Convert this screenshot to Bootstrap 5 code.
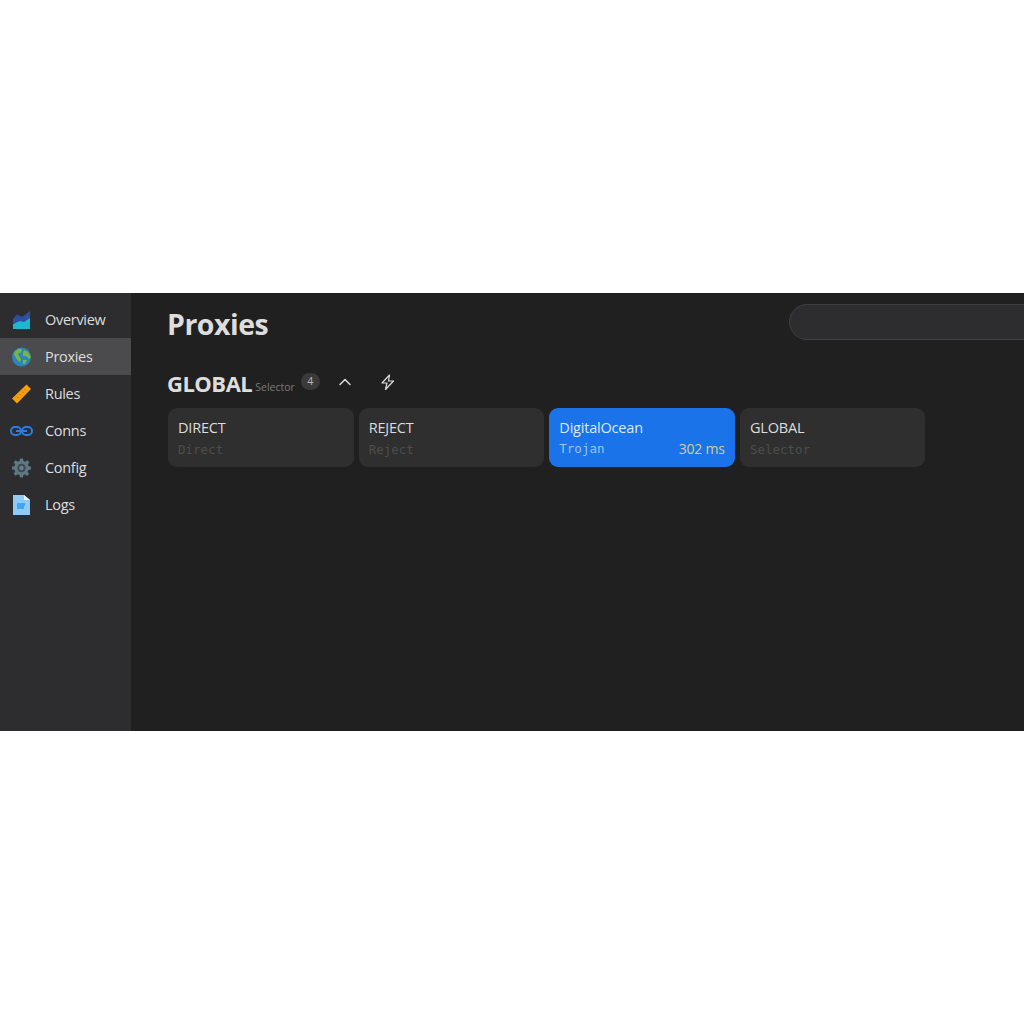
<!DOCTYPE html>
<html lang="en">
<head>
    <meta charset="UTF-8">
    <meta name="viewport" content="width=device-width, initial-scale=1.0">
    <link href="https://cdn.jsdelivr.net/npm/bootstrap@5.3.0/dist/css/bootstrap.min.css" rel="stylesheet">
    <style>
        body { background: #fff; font-family: "Open Sans", "Noto Sans", sans-serif; overflow: hidden; }
        .app-shell { height: 438px; width: 1024px; background: #202020; color: #ddd; overflow: hidden; }
        .side-bar { width: 131px; background: #2d2d30; padding-top: 8px; flex: none; }
        .side-item { height: 37px; padding: 1px 0 0 12px; font-size: 14.5px; color: #ddd; letter-spacing: -0.3px; }
        .side-item.is-active { background: #4b4b4d; }
        .side-icon { width: 19px; height: 20px; margin-right: 14px; flex: none; }
        .side-icon.is-wide { width: 23px; margin-left: -2px; margin-right: 12px; }
        .main-pane { padding: 13px 0 0 37px; min-width: 0; }
        .page-head { height: 36px; margin-top: -2px; }
        .page-title { width: 100px; flex: none; margin: 0 0 0 -1px; padding-top: 4px; font-size: 28.5px; font-weight: 700; color: #ddd; letter-spacing: -0.5px; line-height: 36px; white-space: nowrap; }
        .search-pill { width: 300px; height: 36px; margin-left: 522px; flex: none; background: #2d2d30; border: 1px solid #3f3f42; border-radius: 18px; }
        .group-head { margin-top: 26px; height: 34px; }
        .group-name { font-size: 22px; font-weight: 700; color: #ddd; letter-spacing: -0.5px; line-height: 34px; margin-left: -1px; }
        .group-type { font-size: 10.5px; color: #7b7b7b; margin-left: 3px; margin-top: 9px; }
        .group-count { width: 19px; height: 17px; border-radius: 9px; background: #3a3a3a; color: #bbb; font-size: 10.5px; margin-left: 6px; margin-top: -3px; }
        .head-btn { width: 18px; height: 18px; color: #ddd; margin-top: -2px; }
        .chevron-btn { margin-left: 16px; }
        .bolt-btn { margin-left: 25px; }
        .proxy-grid { display: grid; grid-template-columns: repeat(4, 185.5px); gap: 5.17px; margin-top: 8px; }
        .proxy-card { height: 59px; border-radius: 9px; background: #2f2f2f; padding: 10px 10px 0; }
        .proxy-card.is-now { background: #1a73e8; }
        .proxy-name { font-size: 14.5px; line-height: 20px; color: #ddd; letter-spacing: -0.2px; }
        .proxy-card.is-now .proxy-name { color: #dbe9fb; }
        .proxy-kind { font-family: "DejaVu Sans Mono", "Liberation Mono", monospace; font-size: 12.5px; color: #4d4d4d; line-height: 18px; margin-top: 3px; }
        .proxy-card.is-now .proxy-kind { color: #9cc3f5; margin-top: 2px; }
        .proxy-delay { font-size: 14px; color: #d3cc9f; line-height: 18px; letter-spacing: -0.2px; margin-top: 2px; }
    </style>
</head>
<body class="min-vh-100 d-flex align-items-center m-0">
    <div class="app-shell d-flex">
        <nav class="side-bar">
            <div class="side-item d-flex align-items-center">
                <svg class="side-icon" viewBox="0 0 19 20"><path fill="#2c4fa3" d="M1 9l4-4.500 5 2.500 8-6v12H1z"/><path fill="#1fb6cf" d="M1 14l7-3 4 1 6-4v11H1z"/></svg>
                Overview
            </div>
            <div class="side-item is-active d-flex align-items-center">
                <svg class="side-icon" viewBox="0 0 19 20"><circle cx="9.500" cy="10" r="9.500" fill="#2a86bd"/><path fill="#7cb342" d="M3 4.500l4-3 3 1-1 3-3 1 1 3 2 2-1 4-3-3-3-5zM12 3l4 2 3 5-2 2-3-3-3 0 0-3zM11 13l4 0-2 4-2 0z"/></svg>
                Proxies
            </div>
            <div class="side-item d-flex align-items-center">
                <svg class="side-icon" viewBox="0 0 19 20"><path fill="#f59f0b" d="M14.500 0.500L19 5 5 19.500 0 14.500z"/><path stroke="#c47c04" stroke-width="1" d="M12.500 5l1.500 1.500M10 7.500l1.500 1.500M7.500 10L9 11.500M5 12.500L6.500 14"/></svg>
                Rules
            </div>
            <div class="side-item d-flex align-items-center">
                <svg class="side-icon is-wide" viewBox="0 0 23 20"><g fill="none" stroke="#2a7de1" stroke-width="2"><rect x="1" y="6" width="10" height="8" rx="4"/><rect x="12" y="6" width="10" height="8" rx="4"/><path d="M6 10h11"/></g></svg>
                Conns
            </div>
            <div class="side-item d-flex align-items-center">
                <svg class="side-icon" viewBox="0 0 19 19"><path fill="#5f7782" d="M8 0h3l.5 2.600 1.700.7 2.200-1.500 2 2-1.500 2.200.7 1.700L19 8v3l-2.600.5-.7 1.700 1.500 2.200-2 2-2.200-1.500-1.700.7L11 19H8l-.5-2.600-1.700-.7-2.200 1.500-2-2 1.500-2.200-.7-1.700L0 11V8l2.400-.3.7-1.700-1.500-2.200 2-2 2.200 1.500 1.700-.7z"/><circle cx="9.500" cy="9.500" r="4.200" fill="#3c4a50"/><circle cx="9.500" cy="9.500" r="2.200" fill="#6a7f89"/></svg>
                Config
            </div>
            <div class="side-item d-flex align-items-center">
                <svg class="side-icon" viewBox="0 0 19 20"><path fill="#90caf9" d="M1 0h11l6 5v15H1z"/><path fill="#e3f2fd" d="M12 0l6 5h-6z"/><path fill="#42a5f5" d="M5 8h8v3h-1v3H5z"/></svg>
                Logs
            </div>
        </nav>
        <main class="main-pane flex-grow-1">
            <div class="page-head d-flex align-items-center">
                <h1 class="page-title">Proxies</h1>
                <div class="search-pill"></div>
            </div>
            <div class="group-head d-flex align-items-center">
                <span class="group-name">GLOBAL</span>
                <span class="group-type">Selector</span>
                <span class="group-count d-flex align-items-center justify-content-center">4</span>
                <svg class="head-btn chevron-btn" viewBox="0 0 18 18" fill="none" stroke="currentColor" stroke-width="1.500" stroke-linecap="round" stroke-linejoin="round"><path d="M4 11.500l5-5 5 5"/></svg>
                <svg class="head-btn bolt-btn" viewBox="0 0 18 18" fill="none" stroke="currentColor" stroke-width="1.200" stroke-linejoin="round"><path d="M10.500 2L3 10h5l-1.500 6.500L14.500 8H9.500z"/></svg>
            </div>
            <div class="proxy-grid" id="proxyGrid"></div>
        </main>
    </div>
    <script src="https://cdn.jsdelivr.net/npm/bootstrap@5.3.0/dist/js/bootstrap.bundle.min.js"></script>
    <script>
        const proxies = [
            { name: "DIRECT", kind: "Direct" },
            { name: "REJECT", kind: "Reject" },
            { name: "DigitalOcean", kind: "Trojan", delay: "302 ms", now: true },
            { name: "GLOBAL", kind: "Selector" }
        ];
        document.getElementById('proxyGrid').innerHTML = proxies.map(p => `
            <div class="proxy-card ${p.now ? 'is-now' : ''}">
                <div class="proxy-name">${p.name}</div>
                <div class="d-flex justify-content-between">
                    <span class="proxy-kind">${p.kind}</span>
                    ${p.delay ? `<span class="proxy-delay">${p.delay}</span>` : ''}
                </div>
            </div>`).join('');
    </script>
</body>
</html>
